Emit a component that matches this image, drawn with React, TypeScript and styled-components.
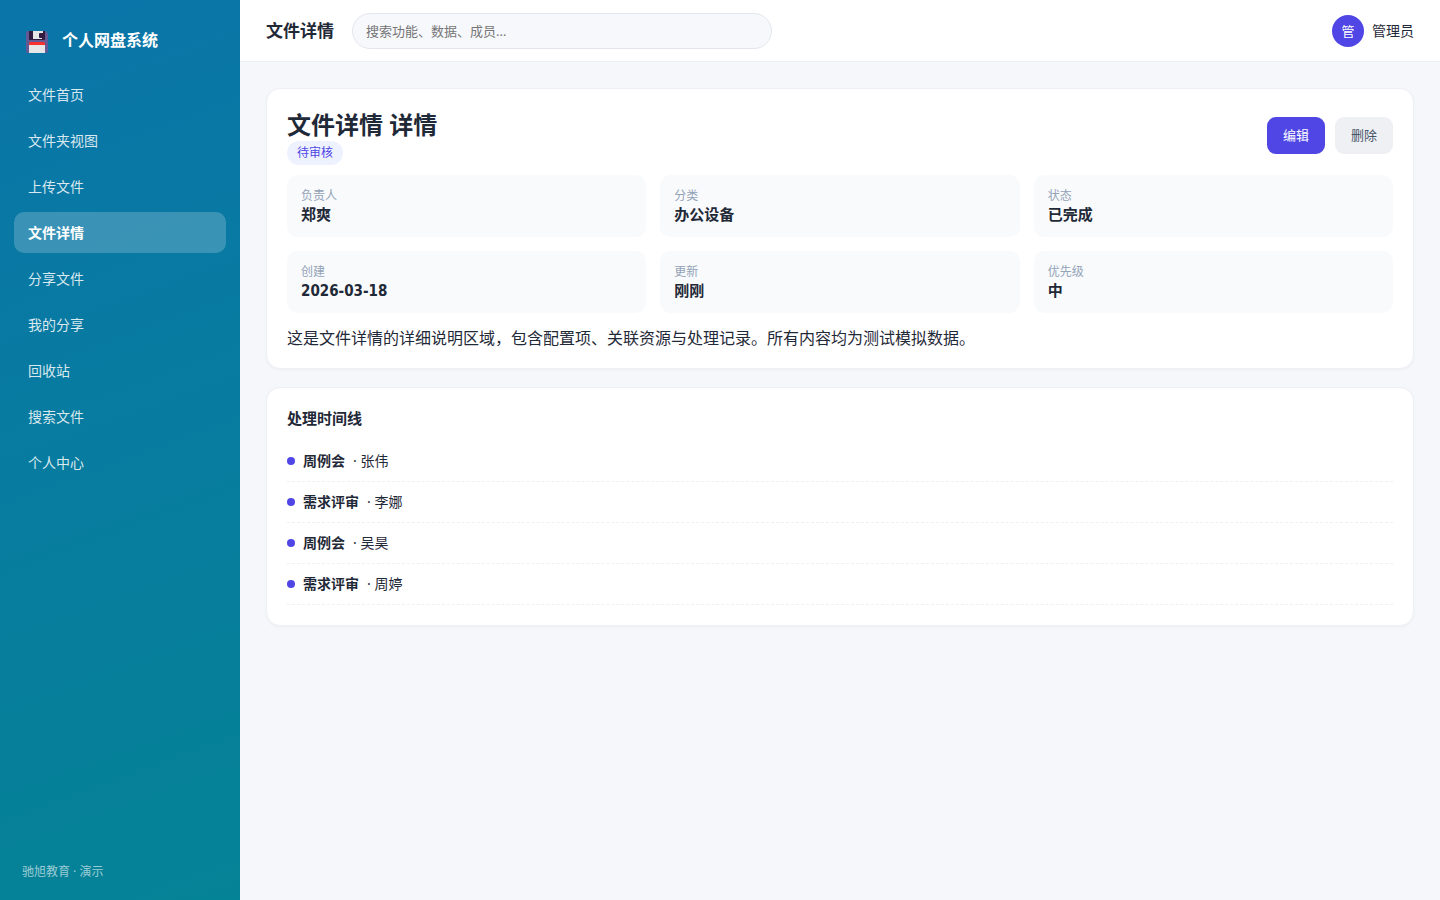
import React from "react";
import styled, { createGlobalStyle } from "styled-components";

const GlobalStyle = createGlobalStyle`
  *, *::before, *::after { box-sizing: border-box; }
  body {
    margin: 0;
    background: #f5f7fb;
    color: #1f2937;
    font-family: "Noto Sans", "Noto Sans CJK SC", sans-serif;
    font-size: 14px;
    line-height: 20px;
  }
  h1, h2, p, ul, dl, dd { margin: 0; padding: 0; }
  button, input { font-family: inherit; }
`;

const Shell = styled.div`
  display: flex;
  min-height: 100vh;
`;

const Sidebar = styled.aside`
  display: flex;
  flex-direction: column;
  flex: none;
  width: 240px;
  padding: 20px 14px 19px;
  background: linear-gradient(160deg, #0a75a9, #058396);
  color: #fff;
`;

const Brand = styled.div`
  display: flex;
  align-items: flex-end;
  gap: 14px;
  padding: 7px 12px 21px;
  font-size: 16px;
  line-height: 26px;
  font-weight: 600;
`;

const Nav = styled.nav`
  display: flex;
  flex-direction: column;
  gap: 5px;
`;

const NavLink = styled.a<{ $active?: boolean }>`
  padding: 11px 14px 10px;
  border-radius: 10px;
  background: ${(p) => (p.$active ? "rgba(255, 255, 255, 0.2)" : "transparent")};
  color: ${(p) => (p.$active ? "#fff" : "rgba(255, 255, 255, 0.85)")};
  font-weight: ${(p) => (p.$active ? 700 : 400)};
  text-decoration: none;
`;

const SideFooter = styled.div`
  margin-top: auto;
  padding: 0 8px;
  font-size: 12px;
  line-height: 18px;
  color: rgba(255, 255, 255, 0.6);
`;

const Main = styled.div`
  flex: 1;
  min-width: 0;
`;

const TopBar = styled.header`
  display: flex;
  align-items: center;
  gap: 18px;
  height: 62px;
  padding: 0 26px;
  background: #fff;
  border-bottom: 1px solid #eceef3;
`;

const PageName = styled.div`
  font-size: 17px;
  line-height: 24px;
  font-weight: 600;
`;

const Search = styled.input`
  width: 420px;
  height: 36px;
  padding: 0 13px;
  border: 1px solid #e3e6ee;
  border-radius: 18px;
  background: #f7f8fc;
  font-size: 13px;
  color: inherit;
  &::placeholder { color: #757575; opacity: 1; }
`;

const User = styled.div`
  display: flex;
  align-items: center;
  gap: 8px;
  margin-left: auto;
`;

const Avatar = styled.span`
  display: flex;
  align-items: center;
  justify-content: center;
  width: 32px;
  height: 32px;
  border-radius: 50%;
  background: #4f46e5;
  color: #fff;
  font-size: 13px;
`;

const Content = styled.main`
  display: flex;
  flex-direction: column;
  gap: 18px;
  padding: 26px;
`;

const Card = styled.section`
  padding: 20px;
  border: 1px solid #eef0f5;
  border-radius: 14px;
  background: #fff;
  box-shadow: 0 1px 3px rgba(15, 23, 42, 0.04);
`;

const DetailHead = styled.div`
  display: flex;
  justify-content: space-between;
  align-items: flex-start;
  margin-bottom: 10px;
`;

const Title = styled.h1`
  font-size: 24px;
  line-height: 32px;
  font-weight: 700;
`;

const Badge = styled.span`
  display: block;
  width: fit-content;
  padding: 3px 10px;
  border-radius: 12px;
  background: #eef2ff;
  color: #4f46e5;
  font-size: 12px;
  line-height: 18px;
`;

const Actions = styled.div`
  display: flex;
  gap: 10px;
  padding-top: 8px;
`;

const Button = styled.button<{ $primary?: boolean }>`
  padding: 8px 16px 9px;
  border: 0;
  border-radius: 9px;
  background: ${(p) => (p.$primary ? "#4f46e5" : "#eef0f4")};
  color: ${(p) => (p.$primary ? "#fff" : "#475569")};
  font-size: 13px;
  line-height: 20px;
  cursor: pointer;
`;

const InfoGrid = styled.dl`
  display: grid;
  grid-template-columns: repeat(3, 1fr);
  gap: 14px;
`;

const InfoTile = styled.div`
  padding: 12px 14px;
  border-radius: 10px;
  background: #f8fafc;
`;

const InfoLabel = styled.dt`
  font-size: 12px;
  line-height: 18px;
  color: #94a3b8;
`;

const InfoValue = styled.dd`
  font-family: "DejaVu Sans Condensed", "Noto Sans CJK SC", sans-serif;
  font-size: 15px;
  line-height: 20px;
  font-weight: 700;
`;

const Description = styled.p`
  margin-top: 15px;
  font-size: 16px;
  line-height: 20px;
`;

const SectionTitle = styled.h2`
  margin-bottom: 13px;
  font-size: 15px;
  line-height: 20px;
  font-weight: 600;
`;

const Timeline = styled.ul`
  list-style: none;
`;

const TimelineRow = styled.li`
  display: flex;
  align-items: center;
  gap: 8px;
  padding: 10px 0;
  border-bottom: 1px dashed #eef0f4;
`;

const Dot = styled.span`
  width: 8px;
  height: 8px;
  border-radius: 50%;
  background: #4f46e5;
`;

const FloppyIcon = () => (
  <svg width="22" height="22" viewBox="0 0 22 22" aria-hidden="true">
    <path d="M2 0H19.500L22 2.500V20Q22 22 20 22H2Q0 22 0 20V2Q0 0 2 0Z" fill="#635994" />
    <path d="M3 0H19V8Q19 9 18 9H4Q3 9 3 8Z" fill="#321b41" />
    <path d="M7 0H17V2H14Q13 2 13 3V6Q13 7 14 7H16V8H7Z" fill="#e6e6e6" />
    <path d="M3 14V12.500Q3 11 4.500 11H17.500Q19 11 19 12.500V14Z" fill="#f8312f" />
    <path d="M3 14H19V22H3Z" fill="#e6e6e6" />
  </svg>
);

const navItems = [
  "文件首页",
  "文件夹视图",
  "上传文件",
  "文件详情",
  "分享文件",
  "我的分享",
  "回收站",
  "搜索文件",
  "个人中心",
];

const info = [
  ["负责人", "郑爽"],
  ["分类", "办公设备"],
  ["状态", "已完成"],
  ["创建", "2026-03-18"],
  ["更新", "刚刚"],
  ["优先级", "中"],
];

const events = [
  ["周例会", "张伟"],
  ["需求评审", "李娜"],
  ["周例会", "吴昊"],
  ["需求评审", "周婷"],
];

export default function App() {
  return (
    <>
      <GlobalStyle />
      <Shell>
        <Sidebar>
          <Brand>
            <FloppyIcon />
            <span>个人网盘系统</span>
          </Brand>
          <Nav>
            {navItems.map((item) => (
              <NavLink
                key={item}
                href="#"
                $active={item === "文件详情"}
                aria-current={item === "文件详情" ? "page" : undefined}
              >
                {item}
              </NavLink>
            ))}
          </Nav>
          <SideFooter>驰旭教育 · 演示</SideFooter>
        </Sidebar>
        <Main>
          <TopBar>
            <PageName>文件详情</PageName>
            <Search type="search" aria-label="搜索" placeholder="搜索功能、数据、成员..." />
            <User>
              <Avatar>管</Avatar>
              <span>管理员</span>
            </User>
          </TopBar>
          <Content>
            <Card>
              <DetailHead>
                <div>
                  <Title>文件详情 详情</Title>
                  <Badge>待审核</Badge>
                </div>
                <Actions>
                  <Button type="button" $primary>编辑</Button>
                  <Button type="button">删除</Button>
                </Actions>
              </DetailHead>
              <InfoGrid>
                {info.map(([label, value]) => (
                  <InfoTile key={label}>
                    <InfoLabel>{label}</InfoLabel>
                    <InfoValue>{value}</InfoValue>
                  </InfoTile>
                ))}
              </InfoGrid>
              <Description>
                这是文件详情的详细说明区域，包含配置项、关联资源与处理记录。所有内容均为测试模拟数据。
              </Description>
            </Card>
            <Card>
              <SectionTitle>处理时间线</SectionTitle>
              <Timeline>
                {events.map(([name, person], i) => (
                  <TimelineRow key={i}>
                    <Dot />
                    <strong>{name}</strong>
                    <span>· {person}</span>
                  </TimelineRow>
                ))}
              </Timeline>
            </Card>
          </Content>
        </Main>
      </Shell>
    </>
  );
}
